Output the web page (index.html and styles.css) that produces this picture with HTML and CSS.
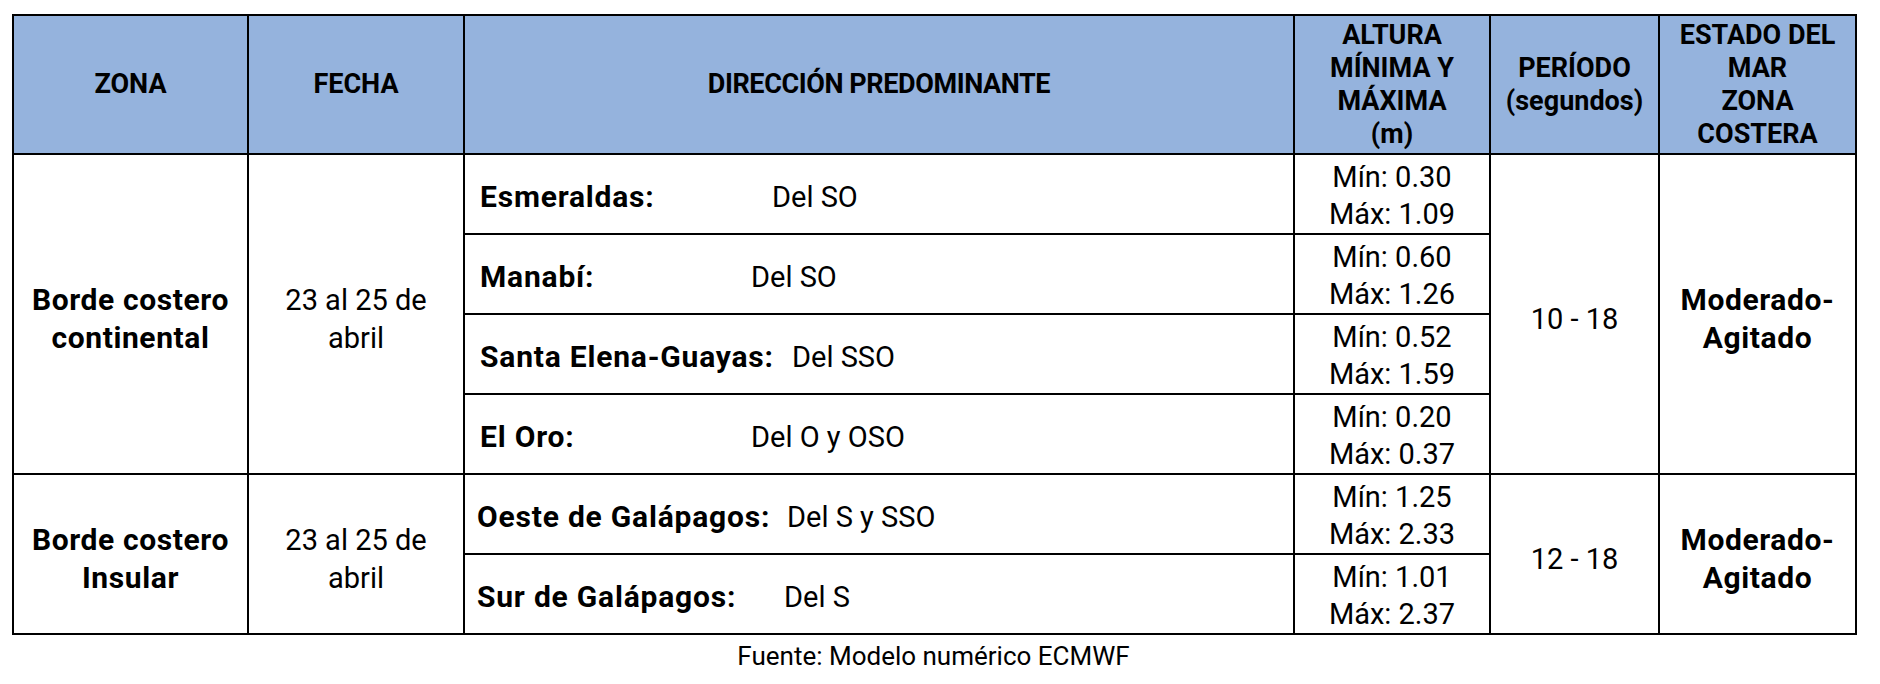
FILE: index.html
```html
<!DOCTYPE html>
<html lang="es">
<head>
<meta charset="utf-8">
<title>Pronóstico de oleaje</title>
<link rel="stylesheet" href="styles.css">
</head>
<body>
<div class="page">
  <table class="forecast">
    <colgroup>
      <col class="c-zona">
      <col class="c-fecha">
      <col class="c-dir">
      <col class="c-alt">
      <col class="c-per">
      <col class="c-est">
    </colgroup>
    <thead>
      <tr class="head">
        <th>ZONA</th>
        <th>FECHA</th>
        <th class="h-dir">DIRECCIÓN PREDOMINANTE</th>
        <th>ALTURA<br>MÍNIMA Y<br>MÁXIMA<br>(m)</th>
        <th>PERÍODO<br>(segundos)</th>
        <th>ESTADO DEL<br>MAR<br>ZONA<br>COSTERA</th>
      </tr>
    </thead>
    <tbody>
      <tr class="row">
        <td rowspan="4" class="zona">Borde costero<br>continental</td>
        <td rowspan="4" class="fecha">23 al 25 de<br>abril</td>
        <td class="dir"><span class="lbl l-esm">Esmeraldas:</span><span class="val">Del SO</span></td>
        <td class="alt">Mín: 0.30<br>Máx: 1.09</td>
        <td rowspan="4" class="per">10 - 18</td>
        <td rowspan="4" class="est">Moderado-<br>Agitado</td>
      </tr>
      <tr class="row">
        <td class="dir"><span class="lbl l-man">Manabí:</span><span class="val">Del SO</span></td>
        <td class="alt">Mín: 0.60<br>Máx: 1.26</td>
      </tr>
      <tr class="row">
        <td class="dir"><span class="lbl l-seg">Santa Elena-Guayas:</span><span class="val">Del SSO</span></td>
        <td class="alt">Mín: 0.52<br>Máx: 1.59</td>
      </tr>
      <tr class="row">
        <td class="dir"><span class="lbl l-oro">El Oro:</span><span class="val">Del O y OSO</span></td>
        <td class="alt">Mín: 0.20<br>Máx: 0.37</td>
      </tr>
      <tr class="row">
        <td rowspan="2" class="zona">Borde costero<br>Insular</td>
        <td rowspan="2" class="fecha">23 al 25 de<br>abril</td>
        <td class="dir dir-ins"><span class="lbl l-oes">Oeste de Galápagos:</span><span class="val">Del S y SSO</span></td>
        <td class="alt">Mín: 1.25<br>Máx: 2.33</td>
        <td rowspan="2" class="per">12 - 18</td>
        <td rowspan="2" class="est">Moderado-<br>Agitado</td>
      </tr>
      <tr class="row">
        <td class="dir dir-ins"><span class="lbl l-sur">Sur de Galápagos:</span><span class="val">Del S</span></td>
        <td class="alt">Mín: 1.01<br>Máx: 2.37</td>
      </tr>
    </tbody>
  </table>
  <p class="source">Fuente: Modelo numérico ECMWF</p>
</div>
</body>
</html>
```

FILE: styles.css
```css
html, body {
  margin: 0;
  padding: 0;
  background: #ffffff;
}

body {
  font-family: Roboto, "Liberation Sans", sans-serif;
  color: #000000;
}

.page {
  padding: 14px 0 0 12px;
  width: 1843px;
}

.forecast {
  border-collapse: collapse;
  table-layout: fixed;
  width: 1843px;
}

.c-zona { width: 235px; }
.c-fecha { width: 216px; }
.c-dir { width: 830px; }
.c-alt { width: 196px; }
.c-per { width: 169px; }
.c-est { width: 197px; }

.forecast th,
.forecast td {
  border: 2px solid #000000;
  padding: 0;
  vertical-align: middle;
  text-align: center;
}

.head {
  height: 139px;
}

.head th {
  background: #95b3dd;
  font-size: 27px;
  font-weight: 700;
  line-height: 33px;
}

.head .h-dir {
  letter-spacing: -0.4px;
}

.row {
  height: 80px;
}

.row td {
  font-size: 29px;
  line-height: 37px;
}

.forecast .alt {
  padding-top: 4px;
}

.forecast .zona,
.forecast .est {
  font-weight: 700;
  font-size: 30px;
  letter-spacing: 0.6px;
  line-height: 38px;
  padding-top: 10px;
}

.forecast .fecha,
.forecast .per {
  line-height: 38px;
  padding-top: 10px;
}

.forecast .dir {
  text-align: left;
  white-space: nowrap;
  padding-top: 6px;
}

.lbl {
  display: inline-block;
  box-sizing: border-box;
  padding-left: 15px;
  font-weight: 700;
  font-size: 30px;
  letter-spacing: 0.8px;
}

.dir-ins .lbl {
  padding-left: 12px;
}

.l-esm { width: 307px; }
.l-man { width: 286px; }
.l-seg { width: 327px; }
.l-oro { width: 286px; }
.l-oes { width: 322px; }
.l-sur { width: 319px; }

.source {
  margin: 6px 0 0 0;
  text-align: center;
  font-size: 26px;
  line-height: 30px;
}
```
